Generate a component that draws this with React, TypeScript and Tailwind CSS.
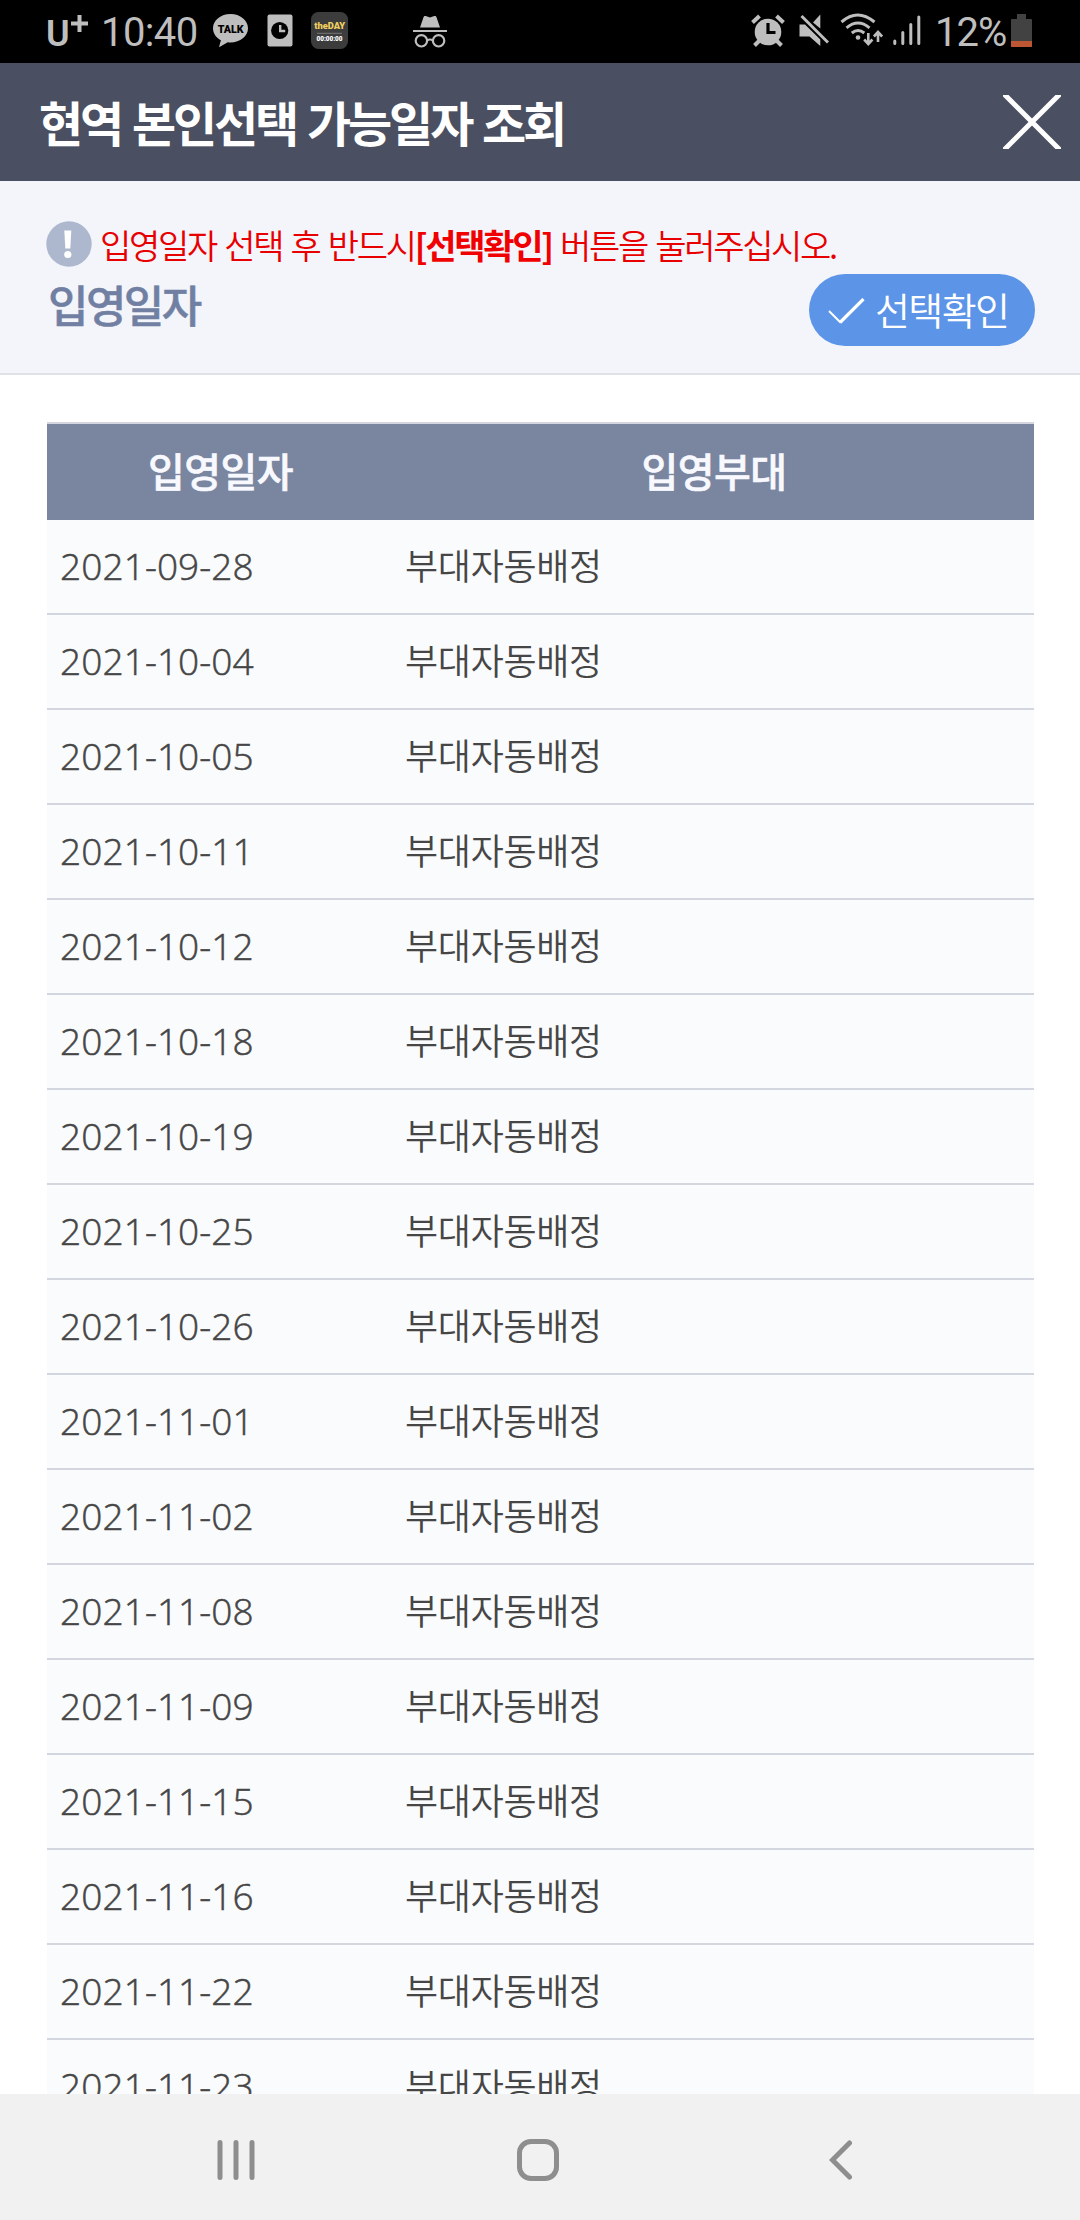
import React from 'react';

const dates = [
  '2021-09-28',
  '2021-10-04',
  '2021-10-05',
  '2021-10-11',
  '2021-10-12',
  '2021-10-18',
  '2021-10-19',
  '2021-10-25',
  '2021-10-26',
  '2021-11-01',
  '2021-11-02',
  '2021-11-08',
  '2021-11-09',
  '2021-11-15',
  '2021-11-16',
  '2021-11-22',
  '2021-11-23',
];

const StatusBar: React.FC = () => (
  <div className="flex h-[63px] shrink-0 items-start bg-black font-['Roboto',sans-serif] text-[#bebebe]">
    {/* Carrier */}
    <div className="ml-[46px] flex w-[44px] items-start">
      <span className="mt-[13px] w-[25px] text-[36px] leading-[42px] font-semibold">U</span>
      <svg className="mt-[15px] h-[17px] w-[17px]" viewBox="0 0 17 17" stroke="currentColor" strokeWidth="4">
        <path d="M8.5 0v17M0 8.5h17" />
      </svg>
    </div>
    <span className="mt-[9px] ml-[11px] w-[98px] text-[40px] leading-[48px] tracking-[-0.6px]">10:40</span>

    {/* Notifications */}
    <svg className="mt-[14px] ml-[14px] h-[34px] w-[35px]" viewBox="0 0 35 34">
      <path
        d="M17.5 0C7.8 0 0 6.3 0 14.2c0 5 3.1 9.5 7.9 12L6 33.2l8.8-5c.9.1 1.8.2 2.7.2 9.7 0 17.5-6.3 17.5-14.2S27.2 0 17.5 0z"
        fill="#bebebe"
      />
      <text x="17.7" y="19" textAnchor="middle" fontSize="11.5" fontWeight="900" fill="#000" textLength="26" lengthAdjust="spacingAndGlyphs">
        TALK
      </text>
    </svg>
    <svg className="mt-[14px] ml-[19px] h-[33px] w-[26px]" viewBox="0 0 26 33">
      <rect x="0.5" y="0.5" width="25" height="32" rx="2" fill="#bebebe" />
      <circle cx="12.7" cy="16.5" r="8.6" fill="#000" />
      <path d="M13.2 11v6h5" fill="none" stroke="#bebebe" strokeWidth="2.4" />
    </svg>
    <svg className="mt-[12px] ml-[18px] h-[37px] w-[37px]" viewBox="0 0 37 37">
      <rect width="37" height="37" rx="7.5" fill="#3c3c3c" />
      <text x="18.7" y="16.5" textAnchor="middle" fontSize="8.5" fontWeight="900" fill="#f0d060" textLength="31" lengthAdjust="spacingAndGlyphs">
        theDAY
      </text>
      <path d="M6 21.3h25" stroke="#777" strokeWidth="1" />
      <text x="18.5" y="29.3" textAnchor="middle" fontSize="6.5" fontWeight="900" fill="#fff" textLength="26" lengthAdjust="spacingAndGlyphs">
        00:00:00
      </text>
    </svg>
    <svg className="mt-[15px] ml-[65px] h-[33px] w-[34px]" viewBox="0 0 34 33" fill="#bebebe">
      <path d="M7 12.5 10.5 2.2c.3-1 1.2-1.4 2.2-1.1l4.3 1.3 4.3-1.3c1-.3 1.9.1 2.2 1.1L27 12.5z" />
      <path d="M0 15h34v2H0z" />
      <g fill="none" stroke="#bebebe" strokeWidth="2.2">
        <circle cx="8.4" cy="25.8" r="5.7" />
        <circle cx="25.6" cy="25.8" r="5.7" />
        <path d="M14 25.5q3-2 6 0" />
      </g>
    </svg>

    {/* System state */}
    <svg className="mt-[14px] ml-[304px] h-[33px] w-[34px]" viewBox="0 0 34 33" fill="none" stroke="#bebebe">
      <circle cx="17" cy="18" r="13.3" fill="#bebebe" stroke="none" />
      <path d="M1.5 8.5 8.5 2M32.5 8.5 25.5 2" strokeWidth="4" />
      <path d="M8 27l-4.5 4.5M26 27l4.5 4.5" strokeWidth="4" />
      <path d="M17 9v9.5h7.5" stroke="#000" strokeWidth="3.2" />
    </svg>
    <svg className="mt-[14px] ml-[14px] h-[33px] w-[30px]" viewBox="0 0 30 33" fill="#bebebe">
      <path d="M14 8.5 21.3 0.5V14.5z" />
      <path d="M0.5 10.5h5.5l15.3 15V32L10.5 22.5h-10z" />
      <path d="M2.5 2 29 28.5" stroke="#bebebe" strokeWidth="3" />
    </svg>
    <svg className="mt-[13px] ml-[11px] h-[33px] w-[43px]" viewBox="0 0 43 33" fill="none" stroke="#bebebe" strokeWidth="3">
      <path d="M1.5 9q16-14 33 0M6.5 14.8q11.5-9.5 23 0M11.8 20q6.2-5 12.5 0" />
      <circle cx="18" cy="24.5" r="2.3" fill="#bebebe" stroke="none" />
      <path d="M28.3 20v11M24.2 26.5l4.1 4.5 4.1-4.5M38 29V19M33.9 23.5l4.1-4.5 4.1 4.5" strokeWidth="2.6" />
    </svg>
    <svg className="mt-[15px] ml-[10px] h-[31px] w-[28px]" viewBox="0 0 28 31" stroke="#bebebe" strokeWidth="3" strokeLinecap="round">
      <path d="M1.8 26v2.5M9.8 17.5v11M17.8 9.5v19M25.8 2v26.5" />
    </svg>
    <span className="mt-[9px] ml-[14px] w-[72px] text-[40px] leading-[48px] tracking-[-1px]">12%</span>
    <svg className="mt-[14px] ml-[4px] h-[33px] w-[21px]" viewBox="0 0 21 33">
      <path d="M6 0h9v5h5q1 0 1 1v26q0 1-1 1H1q-1 0-1-1V6q0-1 1-1h5z" fill="#424242" />
      <path d="M0 27h21v5q0 1-1 1H1q-1 0-1-1z" fill="#bd5733" />
    </svg>
  </div>
);

const TitleBar: React.FC = () => (
  <header className="flex h-[118px] shrink-0 items-center justify-between bg-[#4a4f61] pr-[19px] pl-[39px]">
    <h1 className="pb-[2px] text-[48px] leading-none font-bold tracking-[-3.1px] text-white [word-spacing:3px]">
      현역 본인선택 가능일자 조회
    </h1>
    <svg className="h-[54px] w-[58px]" viewBox="0 0 58 54" stroke="#fff" strokeWidth="5">
      <path d="M1-1 57 55M57-1 1 55" />
    </svg>
  </header>
);

const Notice: React.FC = () => (
  <section className="flex h-[194px] shrink-0 flex-col border-b-2 border-[#dfe1e7] bg-[#f3f5fa] px-[46px] pt-[40px]">
    <div className="flex h-[46px] items-center">
      <svg className="h-[46px] w-[46px]" viewBox="0 0 46 46">
        <circle cx="23" cy="23" r="22.7" fill="#adb8ce" />
        <path d="M18.3 9.5h7l-1 18h-5z" fill="#fff" />
        <circle cx="21.8" cy="33.5" r="3.6" fill="#fff" />
      </svg>
      <p className="ml-[8px] pt-[2px] text-[34px] leading-none font-[350] tracking-[-2.3px] whitespace-nowrap text-[#e80000] [word-spacing:3px]">
        입영일자 선택 후 반드시<b className="font-bold text-[#f00000]">[선택확인]</b> 버튼을 눌러주십시오.
      </p>
    </div>
    <div className="flex items-start justify-between">
      <h2 className="mt-[15px] ml-[2px] text-[44px] leading-none font-medium tracking-[-2.6px] text-[#7180a2] [-webkit-text-stroke:0.5px]">
        입영일자
      </h2>
      <button className="mt-[7px] -mr-px flex h-[72px] w-[226px] items-center rounded-full bg-[#5c94e8] pl-[19px] text-white">
        <svg className="mt-[2px] h-[26px] w-[37px]" viewBox="0 0 37 26" fill="none" stroke="#fff">
          <path d="M1 13 12.5 24.5" strokeWidth="2" />
          <path d="M12 24.5 35.5 1" strokeWidth="3.2" />
        </svg>
        <span className="ml-[10px] pb-[3px] text-[38px] leading-none font-[350] tracking-[-1.6px] whitespace-nowrap">선택확인</span>
      </button>
    </div>
  </section>
);

const DateTable: React.FC = () => (
  <main className="min-h-0 flex-1 overflow-hidden bg-white pt-[47px] pr-[46px] pl-[47px]">
    <div className="grid h-[98px] grid-cols-[347px_1fr] items-center border-t-2 border-[#d4d6df] bg-[#7a859f] pb-[4px] text-center text-[40px] leading-none font-medium tracking-[-0.5px] text-[#f8f9ff] [-webkit-text-stroke:0.6px]">
      <span>입영일자</span>
      <span>입영부대</span>
    </div>
    {dates.map((date) => (
      <div
        key={date}
        className="grid h-[95px] grid-cols-[347px_1fr] items-center border-b-2 border-[#d4d6df] bg-[#fafbfd] pb-[4px] text-[#464646]"
      >
        <span className="pt-px pl-[13px] font-['Open_Sans','Noto_Sans',sans-serif] text-[37px] leading-none font-light tracking-[0.1px] [-webkit-text-stroke:0.5px]">
          {date}
        </span>
        <span className="pb-px pl-[11px] text-[36px] leading-none font-[350] tracking-[-0.3px]">부대자동배정</span>
      </div>
    ))}
  </main>
);

const NavBar: React.FC = () => (
  <nav className="flex h-[126px] shrink-0 items-center bg-[#f1f1f1] pt-[6px] pl-[217px] text-[#8e8e8e]">
    <svg className="h-[42px] w-[38px]" viewBox="0 0 38 42" stroke="currentColor" strokeWidth="5" strokeLinecap="round">
      <path d="M3 3.5v35M19 3.5v35M35 3.5v35" />
    </svg>
    <svg className="ml-[262px] h-[42px] w-[42px]" viewBox="0 0 42 42" fill="none" stroke="currentColor" strokeWidth="5">
      <rect x="2.5" y="2.5" width="37" height="37" rx="11.5" />
    </svg>
    <svg className="ml-[270px] h-[42px] w-[24px]" viewBox="0 0 24 42" fill="none" stroke="currentColor" strokeWidth="5" strokeLinecap="round">
      <path d="M20.5 4 3.5 21l17 17" />
    </svg>
  </nav>
);

const App: React.FC = () => {
  return (
    <div className="flex h-[2220px] w-[1080px] flex-col overflow-hidden bg-white font-['Noto_Sans_CJK_KR',sans-serif]">
      <StatusBar />
      <TitleBar />
      <Notice />
      <DateTable />
      <NavBar />
    </div>
  );
};

export default App;
